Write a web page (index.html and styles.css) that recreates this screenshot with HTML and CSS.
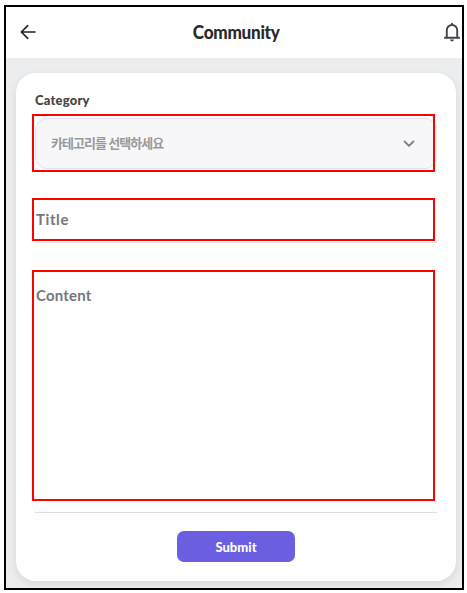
FILE: index.html
```html
<!DOCTYPE html>
<html lang="ko">
<head>
    <meta charset="UTF-8">
    <title>Community</title>
    <link rel="stylesheet" href="styles.css">
</head>
<body>
    <div class="screen">
        <header class="header">
            <svg class="back" width="16" height="16" viewBox="0 0 16 16">
                <path d="M15 8H1.5M7.7 1.6L1.3 8l6.4 6.4"/>
            </svg>
            <h1>Community</h1>
            <svg class="bell" width="16" height="20" viewBox="0 0 16 20">
                <path d="M.8 15.8h14.4M2.8 15.5V8.2a5.2 5.2 0 0 1 10.4 0v7.3M8 3V1.6"/>
                <path class="clapper" d="M6 17.6h4a2 1.8 0 0 1-4 0z"/>
            </svg>
        </header>
        <main>
            <form class="card">
                <label class="label">Category</label>
                <div class="field select marked">
                    <span>카테고리를 선택하세요</span>
                    <svg width="12" height="8" viewBox="0 0 12 8">
                        <path d="M1.6 1.5L6 5.9l4.4-4.4"/>
                    </svg>
                </div>
                <div class="field title marked">Title</div>
                <div class="field content marked">Content</div>
                <button class="submit" type="button">Submit</button>
            </form>
        </main>
    </div>
</body>
</html>
```

FILE: styles.css
```css
* {
    box-sizing: border-box;
}
body {
    margin: 0;
    padding: 5px 0 0 4px;
    background: #fff;
    font-family: Lato, "Noto Sans CJK KR", sans-serif;
}
.screen {
    width: 460px;
    height: 585px;
    border: 2px solid #000;
    background: #ecedef;
    overflow: hidden;
}
.header {
    display: flex;
    align-items: center;
    justify-content: space-between;
    height: 51px;
    padding: 0 2px 2px 14px;
    background: #fff;
}
.header h1 {
    margin: 0 8px 0 0;
    font-size: 19px;
    font-weight: 900;
    letter-spacing: -0.3px;
    color: #292929;
    transform: scaleX(0.9);
}
svg {
    fill: none;
    stroke-linecap: round;
    stroke-linejoin: round;
}
.back {
    stroke: #222;
    stroke-width: 1.6;
}
.bell {
    stroke: #454350;
    stroke-width: 1.9;
}
.bell .clapper {
    fill: #454350;
    stroke: none;
}
main {
    padding: 15px 9px 8px 10px;
}
.card {
    display: flex;
    flex-direction: column;
    height: 508px;
    width: 440px;
    padding: 18px 19px 0;
    border-radius: 20px;
    background: #fff;
    box-shadow: 0 3px 10px rgba(0, 0, 0, 0.09);
}
.label {
    height: 27px;
    line-height: 18px;
    font-size: 13px;
    font-weight: 900;
    letter-spacing: 0.2px;
    color: #454545;
}
.field {
    position: relative;
    color: #777;
}
/* red outline laid over each input */
.marked::after {
    content: "";
    position: absolute;
    border: 2px solid #f00;
}
.select {
    display: flex;
    align-items: center;
    justify-content: space-between;
    height: 51px;
    padding: 0 21px 2px 15px;
    border: 1px solid #e2e3e6;
    border-radius: 12px;
    background: #f7f7fa;
    font-size: 13px;
    font-weight: 700;
    letter-spacing: -0.95px;
    color: #999;
}
.select svg {
    margin-top: 2px;
    stroke: #858585;
    stroke-width: 2;
}
.select::after {
    inset: -5px 1px -4px -4px;
}
.title {
    height: 45px;
    margin-top: 29px;
    padding: 11px 0 0 1px;
    border-bottom: 1px solid #e5e6e8;
    font-size: 15px;
    line-height: 20px;
    font-weight: 700;
    letter-spacing: 0.6px;
}
.title::after {
    inset: 0 2px 1px -3px;
}
.content {
    height: 241px;
    margin-top: 29px;
    padding: 13px 0 0 1px;
    border-bottom: 1px solid #dfdfdf;
    font-size: 15px;
    line-height: 20px;
    font-weight: 700;
    letter-spacing: 0.2px;
}
.content::after {
    inset: -2px 2px 11px -3px;
}
.submit {
    align-self: center;
    width: 118px;
    height: 31px;
    margin-top: 18px;
    padding: 0;
    border: 0;
    border-radius: 7px;
    background: #6b5ee0;
    font: 900 13px Lato, sans-serif;
    color: #fff;
}
```
